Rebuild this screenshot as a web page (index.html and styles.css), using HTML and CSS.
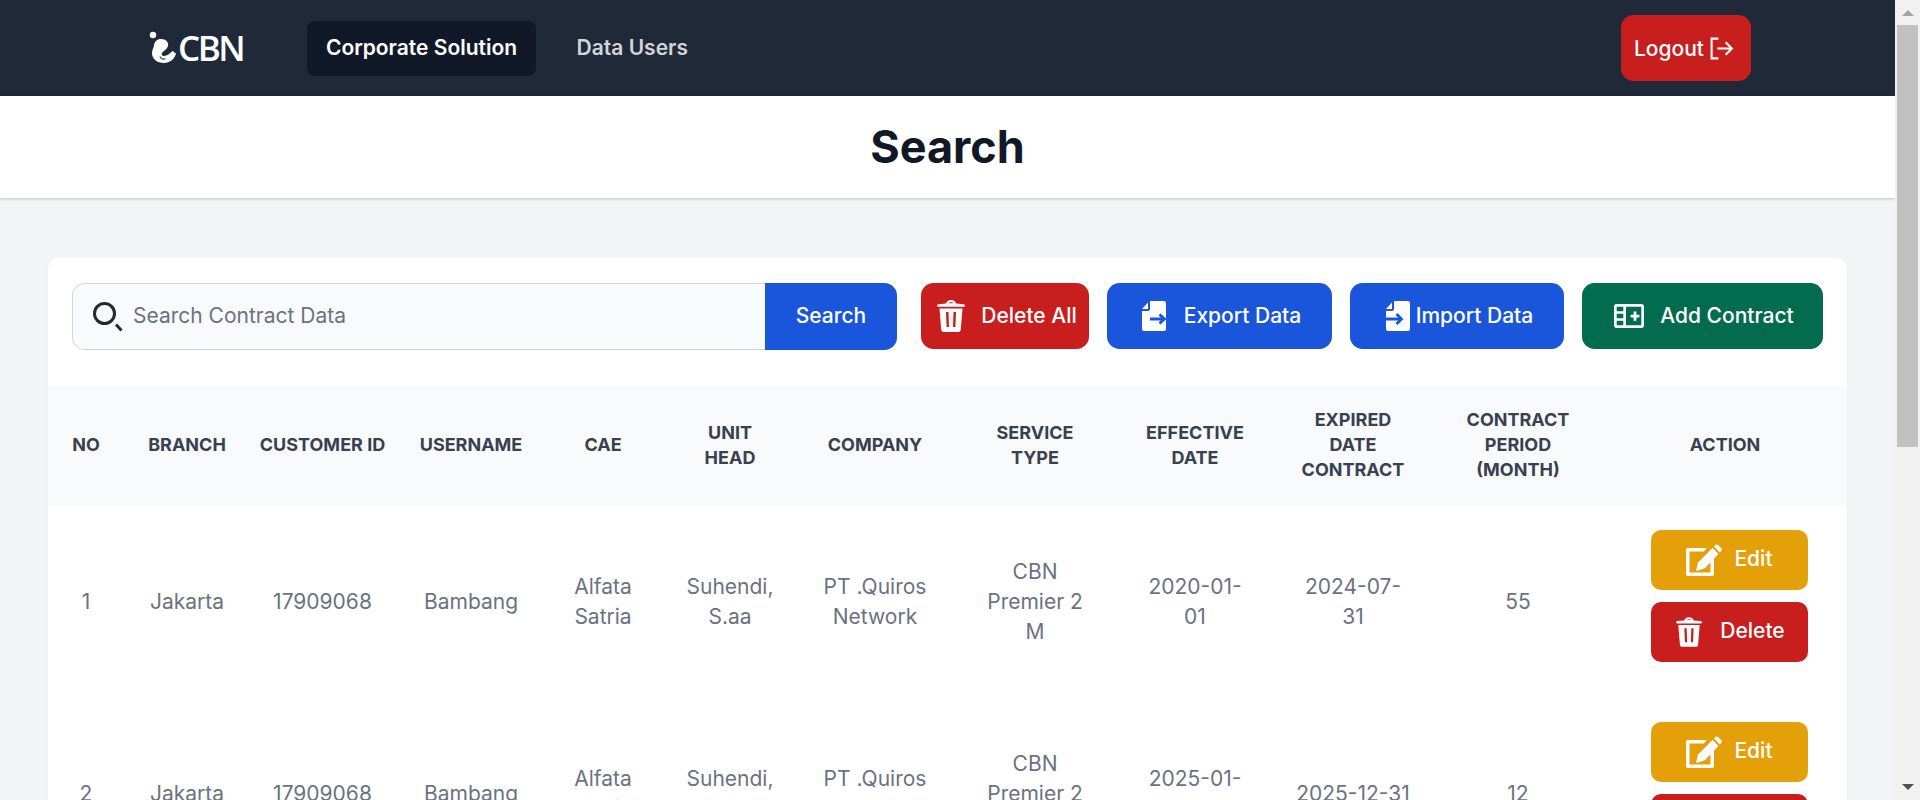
FILE: index.html
```html
<!DOCTYPE html>
<html lang="en">

<head>
    <meta charset="UTF-8">
    <meta name="viewport" content="width=device-width, initial-scale=1.0">
    <title>Corporate Solution</title>
    <link rel="stylesheet" href="styles.css">
</head>

<body>
    <svg class="sprites" aria-hidden="true">
        <symbol id="i-trash" viewBox="0 0 28 32">
            <path fill="currentColor" fill-rule="evenodd" d="M9 3.500C9.500 1.300 11.500 0 14 0s4.500 1.300 5 3.500l7.500.7c1 .1 1.500.6 1.500 1.300s-.5 1.300-1.300 1.300H1.300C.5 6.800 0 6.200 0 5.500s.5-1.200 1.500-1.300zM11.500 3.200h5c-.5-.7-1.300-1-2.500-1s-2 .3-2.500 1zM2.500 8.500h23l-1.700 21c-.1 1.500-1 2.500-2.500 2.500H6.700c-1.500 0-2.400-1-2.500-2.500zM9 12l.6 15h2.400L11.500 12zM16.500 12l-.5 15h2.400L19 12z" />
        </symbol>
        <symbol id="i-export" viewBox="0 0 24 30">
            <path fill="currentColor" d="M8 0h14c1.200 0 2 .8 2 2v26c0 1.200-.8 2-2 2H2c-1.200 0-2-.8-2-2V10h6c1.200 0 2-.8 2-2zM0 8l6-6.500V8z" />
            <path class="cut_blue" d="M8 18h15M17.500 13.500l5 4.500-5 4.500" />
        </symbol>
        <symbol id="i-import" viewBox="0 0 24 30">
            <path fill="currentColor" d="M8 0h14c1.200 0 2 .8 2 2v26c0 1.200-.8 2-2 2H2c-1.200 0-2-.8-2-2V10h6c1.200 0 2-.8 2-2zM0 8l6-6.500V8z" />
            <path class="cut_blue" d="M-1 18h16M10.500 13l5 5-5 5" />
        </symbol>
        <symbol id="i-table" viewBox="0 0 30 24">
            <path fill="currentColor" fill-rule="evenodd" d="M2.500 0h25C29 0 30 1 30 2.500v19c0 1.500-1 2.500-2.500 2.500h-25C1 24 0 23 0 21.500v-19C0 1 1 0 2.500 0zm.2 2.700v4.500h6.600V2.700zm0 7v4.500h6.600V9.700zm0 7v4.600h6.600v-4.600zm9.300-14v18.600h15.300V2.700zm4.600 8h3V7.500h2.800v3.200h3v2.800h-3v3.200h-2.800v-3.200h-3z" />
        </symbol>
        <symbol id="i-edit" viewBox="0 0 36 32">
            <path fill="currentColor" d="M2 4h19l-3.500 3.500h-14V28.500H24.500V17.500L28 14v16c0 1.200-.8 2-2 2H2c-1.200 0-2-.8-2-2V6c0-1.200.8-2 2-2z" />
            <path fill="currentColor" d="M10 27l2-8.500L26.500 4l6 6-14 14.500zM28 2.500 29.500 1c.8-.8 1.800-.8 2.500 0l3.300 3.300c.8.800.8 1.800 0 2.500L33.800 8.500z" />
        </symbol>
    </svg>

    <nav class="topbar">
        <a class="logo" href="#">
            <svg class="logo_mark" viewBox="0 0 30 34" aria-hidden="true">
                <circle cx="4" cy="4" r="3.200" fill="#fff" />
                <path fill="#fff" d="M12 8c5 0 8 3.500 7 7-.8 3-4 4.500-6 7-1 1.500 0 3 2 3 3 0 6-2.500 8.500-5l3.500 2.500C26 27.500 21 32 15 32 8 32 3 28 3 22c0-3 1.500-4.500 2-7.500C5.500 10.500 8 8 12 8z" />
                <path fill="none" stroke="#2a5f9e" stroke-width="1.300" d="M11 25.500c1 2.500 3.500 3 5.500 2" />
            </svg>
            <span class="logo_text">CBN</span>
        </a>
        <a class="nav_link nav_link_active" href="#">Corporate Solution</a>
        <a class="nav_link" href="#">Data Users</a>
        <a class="logout" href="#">Logout
            <svg class="logout_icon" viewBox="0 0 24 24" aria-hidden="true">
                <path d="M9 2.500H2.500v19H9M8 12h14M16 6l6 6-6 6" />
            </svg>
        </a>
    </nav>

    <header class="page_title">
        <h1>Search</h1>
    </header>

    <main class="content">
        <section class="card">
            <div class="toolbar">
                <form class="search">
                    <div class="search_box">
                        <svg class="search_icon" viewBox="0 0 30 30" aria-hidden="true">
                            <circle cx="11.500" cy="11.500" r="10" />
                            <path d="M23 22.500l5.500 6" />
                        </svg>
                        <input type="text" placeholder="Search Contract Data">
                    </div>
                    <button class="btn btn_blue search_btn" type="button">Search</button>
                </form>
                <div class="toolbar_actions">
                    <button class="btn btn_red btn_delete_all" type="button">
                        <svg class="ico ico_trash"><use href="#i-trash" /></svg>Delete All
                    </button>
                    <button class="btn btn_blue btn_export" type="button">
                        <svg class="ico ico_file"><use href="#i-export" /></svg>Export Data
                    </button>
                    <button class="btn btn_blue btn_import" type="button">
                        <svg class="ico ico_file"><use href="#i-import" /></svg>Import Data
                    </button>
                    <button class="btn btn_green btn_add" type="button">
                        <svg class="ico ico_table"><use href="#i-table" /></svg>Add Contract
                    </button>
                </div>
            </div>

            <table class="contracts">
                <colgroup>
                    <col class="col_no">
                    <col class="col_branch">
                    <col class="col_customer">
                    <col class="col_username">
                    <col class="col_cae">
                    <col class="col_unit">
                    <col class="col_company">
                    <col class="col_service">
                    <col class="col_effective">
                    <col class="col_expired">
                    <col class="col_period">
                    <col class="col_action">
                </colgroup>
                <thead>
                    <tr>
                        <th>No</th>
                        <th>Branch</th>
                        <th>Customer ID</th>
                        <th>Username</th>
                        <th>CAE</th>
                        <th>Unit<br>Head</th>
                        <th>Company</th>
                        <th>Service<br>Type</th>
                        <th>Effective<br>Date</th>
                        <th>Expired<br>Date<br>Contract</th>
                        <th>Contract<br>Period<br>(Month)</th>
                        <th class="th_action">Action</th>
                    </tr>
                </thead>
                <tbody>
                    <tr>
                        <td>1</td>
                        <td>Jakarta</td>
                        <td>17909068</td>
                        <td>Bambang</td>
                        <td>Alfata<br>Satria</td>
                        <td>Suhendi,<br>S.aa</td>
                        <td>PT .Quiros<br>Network</td>
                        <td>CBN<br>Premier 2<br>M</td>
                        <td>2020-01-<br>01</td>
                        <td>2024-07-<br>31</td>
                        <td>55</td>
                        <td class="actions">
                            <a class="btn btn_yellow row_btn" href="#"><svg class="ico ico_edit"><use href="#i-edit" /></svg>Edit</a>
                            <a class="btn btn_red row_btn row_btn_delete" href="#"><svg class="ico ico_trash_sm"><use href="#i-trash" /></svg>Delete</a>
                        </td>
                    </tr>
                    <tr>
                        <td>2</td>
                        <td>Jakarta</td>
                        <td>17909068</td>
                        <td>Bambang</td>
                        <td>Alfata<br>Satria</td>
                        <td>Suhendi,<br>S.aa</td>
                        <td>PT .Quiros<br>Network</td>
                        <td>CBN<br>Premier 2<br>M</td>
                        <td>2025-01-<br>01</td>
                        <td>2025-12-31</td>
                        <td>12</td>
                        <td class="actions">
                            <a class="btn btn_yellow row_btn" href="#"><svg class="ico ico_edit"><use href="#i-edit" /></svg>Edit</a>
                            <a class="btn btn_red row_btn row_btn_delete" href="#"><svg class="ico ico_trash_sm"><use href="#i-trash" /></svg>Delete</a>
                        </td>
                    </tr>
                </tbody>
            </table>
        </section>
    </main>

    <div class="scrollbar" aria-hidden="true">
        <span class="scroll_up"></span>
        <span class="scroll_thumb"></span>
        <span class="scroll_down"></span>
    </div>
</body>

</html>
```
FILE: styles.css
```css
* {
    margin: 0;
    padding: 0;
    box-sizing: border-box;
    font-family: "Inter", sans-serif;
}

html {
    scrollbar-width: none;
}

body {
    margin-right: 25px;
    background-color: #f3f4f6;
    color: #111827;
}

a {
    text-decoration: none;
}

.sprites {
    display: none;
}

.cut_blue {
    fill: none;
    stroke: #1a56db;
    stroke-width: 2.800;
}

/* --------------------- Scrollbar --------------------- */

.scrollbar {
    position: fixed;
    top: 0;
    right: 0;
    bottom: 0;
    width: 25px;
    display: flex;
    flex-direction: column;
    align-items: center;
    background-color: #f1f1f1;
}

.scroll_up {
    margin-top: 10px;
    border-left: 6px solid transparent;
    border-right: 6px solid transparent;
    border-bottom: 6px solid #a3a3a3;
}

.scroll_thumb {
    width: 21px;
    height: 422px;
    margin-top: 9px;
    background-color: #c1c1c1;
}

.scroll_down {
    margin-top: auto;
    margin-bottom: 10px;
    border-left: 6px solid transparent;
    border-right: 6px solid transparent;
    border-top: 6px solid #505050;
}

/* --------------------- Topbar --------------------- */

.topbar {
    height: 96px;
    padding: 0 144px 0 149px;
    display: flex;
    align-items: center;
    background-color: #1f2937;
}

.logo {
    display: flex;
    align-items: center;
    margin-right: 64px;
    color: #fff;
}

.logo_mark {
    width: 30px;
    height: 34px;
}

.logo_text {
    margin-left: -1px;
    font-family: "Open Sans", sans-serif;
    font-size: 35px;
    line-height: 34px;
    font-weight: 600;
    letter-spacing: -2.500px;
}

.nav_link {
    padding: 12.500px 18.750px;
    border-radius: 7.500px;
    font-size: 21px;
    line-height: 30px;
    font-weight: 600;
    color: #d1d5db;
}

.nav_link_active {
    margin-right: 22px;
    background-color: #111827;
    color: #fff;
}

.logout {
    width: 130px;
    height: 66px;
    padding-right: 4px;
    margin-left: auto;
    display: flex;
    align-items: center;
    justify-content: center;
    gap: 5px;
    border-radius: 12.500px;
    background-color: #c81e1e;
    font-size: 21px;
    font-weight: 500;
    color: #fff;
}

.logout_icon {
    width: 25px;
    height: 25px;
    fill: none;
    stroke: #fff;
    stroke-width: 2;
}

/* --------------------- Titulo --------------------- */

.page_title {
    height: 102px;
    display: flex;
    align-items: center;
    justify-content: center;
    background-color: #fff;
    box-shadow: 0 1px 3px rgba(0, 0, 0, 0.2);
}

.page_title h1 {
    font-size: 45px;
    line-height: 50px;
    font-weight: 700;
}

/* --------------------- Card --------------------- */

.content {
    padding: 60px 48px 240px;
}

.card {
    border-radius: 10px;
    background-color: #fff;
    box-shadow: 0 1px 2px rgba(0, 0, 0, 0.06);
}

.toolbar {
    padding: 25px 24px 36px;
    display: flex;
    gap: 24px;
}

.search {
    width: 825px;
    height: 67px;
    display: flex;
}

.search_box {
    flex: 1;
    display: flex;
    align-items: center;
    gap: 10px;
    padding-left: 20px;
    border: 1px solid #d1d5db;
    border-right: 0;
    border-radius: 12.500px 0 0 12.500px;
    background-color: #f9fafb;
}

.search_icon {
    width: 30px;
    height: 30px;
    fill: none;
    stroke: #1f2937;
    stroke-width: 3;
}

.search_box input {
    flex: 1;
    padding-bottom: 2px;
    border: 0;
    outline: 0;
    background: transparent;
    font-size: 21px;
    color: #111827;
}

.search_box input::placeholder {
    color: #6b7280;
}

.toolbar_actions {
    display: flex;
    gap: 18px;
}

/* --------------------- Botoes --------------------- */

.btn {
    padding-bottom: 2px;
    display: flex;
    align-items: center;
    justify-content: center;
    border: 0;
    border-radius: 12.500px;
    font-size: 21px;
    font-weight: 500;
    color: #fff;
}

.btn_blue {
    background-color: #1a56db;
}

.btn_red {
    background-color: #c81e1e;
}

.btn_green {
    background-color: #046c4e;
}

.btn_yellow {
    background-color: #e3a008;
}

.search_btn {
    width: 132px;
    border-radius: 0 12.500px 12.500px 0;
}

.btn_delete_all {
    width: 168px;
    height: 66px;
    padding-left: 4px;
    gap: 16px;
}

.btn_export {
    width: 225px;
    height: 66px;
    padding-left: 4px;
    gap: 18px;
}

.btn_import {
    width: 214px;
    height: 66px;
    padding-left: 5px;
    gap: 6px;
}

.btn_add {
    width: 241px;
    height: 66px;
    padding-left: 3px;
    gap: 16px;
}

.ico {
    flex-shrink: 0;
    margin-top: 2px;
}

.ico_trash {
    width: 28px;
    height: 32px;
}

.ico_trash_sm {
    width: 26px;
    height: 30px;
}

.ico_file {
    width: 24px;
    height: 30px;
}

.ico_table {
    width: 30px;
    height: 24px;
}

.ico_edit {
    width: 36px;
    height: 32px;
}

/* --------------------- Tabela --------------------- */

.contracts {
    width: 100%;
    table-layout: fixed;
    border-collapse: collapse;
}

.col_no { width: 76px; }
.col_branch { width: 126px; }
.col_customer { width: 145px; }
.col_username { width: 152px; }
.col_cae { width: 112px; }
.col_unit { width: 142px; }
.col_company { width: 148px; }
.col_service { width: 172px; }
.col_effective { width: 148px; }
.col_expired { width: 168px; }
.col_period { width: 162px; }
.col_action { width: 248px; }

.contracts thead {
    background-color: #f9fafb;
}

.contracts th {
    height: 120px;
    padding-bottom: 3px;
    font-size: 18px;
    line-height: 25px;
    font-weight: 700;
    text-transform: uppercase;
    color: #374151;
}

.contracts .th_action {
    padding-left: 4px;
}

.contracts td {
    text-align: center;
    font-size: 21px;
    line-height: 30px;
    color: #6b7280;
}

.contracts .actions {
    padding: 24px 0 24px 13px;
}

.row_btn {
    width: 157px;
    height: 60px;
    margin: 0 auto 12px;
    gap: 12px;
    border-radius: 10px;
}

.row_btn_delete {
    padding-left: 2px;
    gap: 18px;
}
```
